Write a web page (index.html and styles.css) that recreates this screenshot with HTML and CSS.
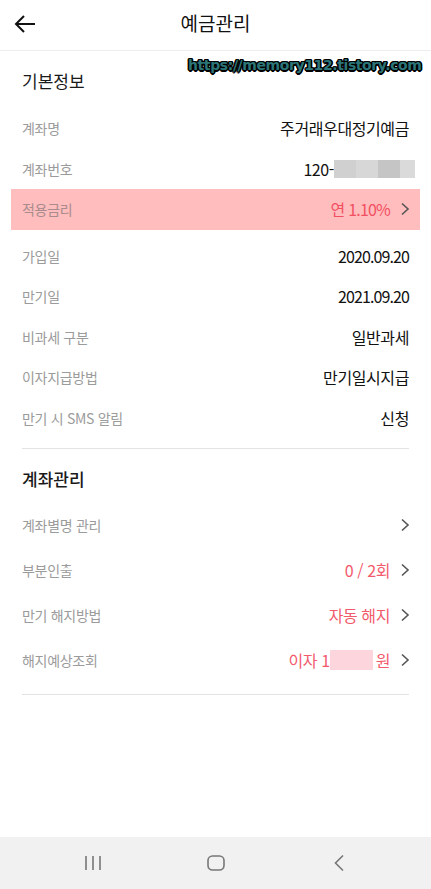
FILE: index.html
```html
<!DOCTYPE html>
<html lang="ko">
<head>
<meta charset="utf-8">
<title>예금관리</title>
<link rel="stylesheet" href="styles.css">
</head>
<body>
<div class="page">
  <header class="topbar">
    <button class="back" aria-label="뒤로">
      <svg width="24" height="20" viewBox="0 0 24 20"><path d="M22 10H3M11 2L3 10l8 8" fill="none" stroke="#111" stroke-width="2"/></svg>
    </button>
    <h1 class="title">예금관리</h1>
    <span class="watermark">https://memory112.tistory.com</span>
  </header>

  <section class="section first">
    <h2 class="heading">기본정보</h2>
    <div class="row"><span class="label">계좌명</span><span class="value">주거래우대정기예금</span></div>
    <div class="row"><span class="label">계좌번호</span><span class="value">120-<span class="mask-acct"><i class="m1"></i><i class="m2"></i><i class="m3"></i><i class="m4"></i></span></span></div>
    <div class="row hl"><span class="label">적용금리</span><span class="value red">연 1.10%<svg class="chev" width="10" height="14" viewBox="0 0 10 14"><path d="M2 1.5l6 5.5-6 5.5" fill="none" stroke="#555" stroke-width="1.6"/></svg></span></div>
    <div class="row"><span class="label">가입일</span><span class="value num">2020.09.20</span></div>
    <div class="row"><span class="label">만기일</span><span class="value num">2021.09.20</span></div>
    <div class="row"><span class="label">비과세 구분</span><span class="value">일반과세</span></div>
    <div class="row"><span class="label">이자지급방법</span><span class="value">만기일시지급</span></div>
    <div class="row"><span class="label">만기 시 SMS 알림</span><span class="value">신청</span></div>
  </section>
  <hr class="divider first-div">

  <section class="section second">
    <h2 class="heading strong">계좌관리</h2>
    <div class="row tall"><span class="label">계좌별명 관리</span><span class="value"><svg class="chev" width="10" height="14" viewBox="0 0 10 14"><path d="M2 1.5l6 5.5-6 5.5" fill="none" stroke="#555" stroke-width="1.6"/></svg></span></div>
    <div class="row tall"><span class="label">부분인출</span><span class="value red">0 / 2회<svg class="chev" width="10" height="14" viewBox="0 0 10 14"><path d="M2 1.5l6 5.5-6 5.5" fill="none" stroke="#555" stroke-width="1.6"/></svg></span></div>
    <div class="row tall"><span class="label">만기 해지방법</span><span class="value red">자동 해지<svg class="chev" width="10" height="14" viewBox="0 0 10 14"><path d="M2 1.5l6 5.5-6 5.5" fill="none" stroke="#555" stroke-width="1.6"/></svg></span></div>
    <div class="row tall"><span class="label">해지예상조회</span><span class="value red">이자 1<i class="mask-int"></i>원<svg class="chev" width="10" height="14" viewBox="0 0 10 14"><path d="M2 1.5l6 5.5-6 5.5" fill="none" stroke="#555" stroke-width="1.6"/></svg></span></div>
  </section>
  <hr class="divider second-div">

  <nav class="navbar">
    <svg width="18" height="16" viewBox="0 0 18 16"><path d="M2 1v14M9 1v14M16 1v14" stroke="#777" stroke-width="1.6"/></svg>
    <svg width="18" height="16" viewBox="0 0 18 16"><rect x="1" y="1" width="16" height="14" rx="4.5" fill="none" stroke="#777" stroke-width="1.6"/></svg>
    <svg width="14" height="18" viewBox="0 0 14 18"><path d="M11 1.5L3.5 9l7.5 7.5" fill="none" stroke="#777" stroke-width="1.6"/></svg>
  </nav>
</div>
</body>
</html>
```
FILE: styles.css
```css
* { box-sizing: border-box; }
html, body { margin: 0; padding: 0; background: #fff; }
body {
  font-family: "Noto Sans CJK KR", "Noto Sans", sans-serif;
  color: #111;
}
.page {
  min-height: 100vh;
  display: flex;
  flex-direction: column;
}
.topbar {
  position: relative;
  height: 51px;
  border-bottom: 1px solid #ededed;
  display: flex;
  align-items: center;
  justify-content: center;
}
.back {
  position: absolute;
  left: 13px;
  top: 14px;
  border: 0;
  background: none;
  padding: 0;
  width: 24px;
  height: 20px;
}
.back svg { display: block; }
.title {
  margin: 0;
  font-size: 19px;
  font-weight: 400;
  line-height: 24px;
  color: #111;
  margin-top: -4px;
}
.watermark {
  position: absolute;
  left: 188px;
  top: 56px;
  font-family: "DejaVu Sans", "Liberation Sans", sans-serif;
  font-weight: 700;
  font-size: 14px;
  line-height: 18px;
  letter-spacing: -0.4px;
  white-space: nowrap;
  color: #2b7478;
  z-index: 2;
  text-shadow: -1px -1px 0 #000, 1px -1px 0 #000, -1px 1px 0 #000, 1px 1px 0 #000,
               0 -1.5px 0 #000, 0 1.5px 0 #000, -1.5px 0 0 #000, 1.5px 0 0 #000;
}
.section {
  padding: 0 22px;
  display: flex;
  flex-direction: column;
}
.section.first { padding-top: 18px; }
.section.second { padding-top: 18px; }
.heading {
  margin: 0;
  font-size: 17px;
  font-weight: 400;
  line-height: 24px;
  color: #1a1a1a;
}
.heading.strong { font-weight: 500; }
.section.first .heading { margin-bottom: 15px; }
.section.second .heading { margin-bottom: 11px; }
.row {
  height: 40.5px;
  display: flex;
  align-items: center;
  justify-content: space-between;
}
.row.tall { height: 45px; }
.label {
  font-size: 14px;
  color: #9b9b9b;
  letter-spacing: -0.3px;
}
.value {
  display: flex;
  align-items: center;
  font-size: 16px;
  color: #111;
  letter-spacing: -0.4px;
}
.value.num { letter-spacing: -0.9px; }
.value.red { color: #f25a6c; }
.chev { margin-left: 10px; margin-right: -1px; }
.row.hl {
  margin: 0 -11px 6px;
  padding: 0 11px;
  background: #ffbdbd;
}
.row.hl .label { color: #a98b8d; }
.row.hl .value.red { color: #f34f62; letter-spacing: -0.8px; }
.mask-acct {
  display: flex;
  height: 18px;
  margin-right: -6px;
}
.mask-acct i { display: block; height: 18px; }
.mask-acct .m1 { width: 22px; background: #d0d0d0; }
.mask-acct .m2 { width: 22px; background: #d7d7d7; }
.mask-acct .m3 { width: 22px; background: #c5c5c5; }
.mask-acct .m4 { width: 15px; background: #dadada; }
.mask-int {
  display: block;
  width: 43px;
  height: 20px;
  background: #fdd6dd;
  margin: 0 3px 0 0;
}
.divider {
  border: 0;
  border-top: 1px solid #e3e3e3;
  margin: 0 22px;
}
.first-div { margin-top: 10px; }
.second-div { margin-top: 12px; }
.navbar {
  margin-top: auto;
  height: 52px;
  background: #f1f1f1;
  display: grid;
  grid-template-columns: repeat(3, 123px);
  align-items: center;
  justify-items: center;
  padding-left: 31px;
}
.navbar svg { display: block; }
```
